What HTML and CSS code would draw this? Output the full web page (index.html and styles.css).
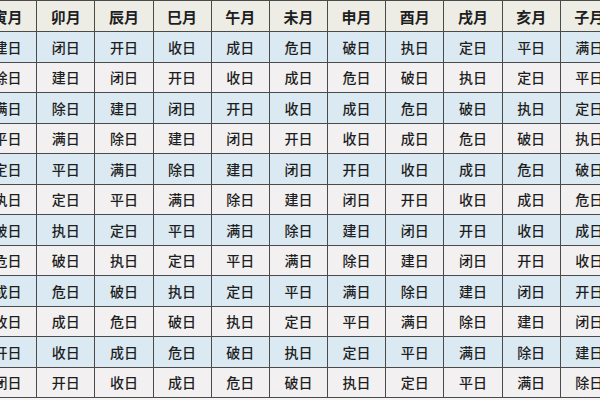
FILE: index.html
```html
<!DOCTYPE html>
<html lang="zh">
<head>
<meta charset="utf-8">
<title>建除十二神</title>
<link rel="stylesheet" href="styles.css">
</head>
<body>
<div class="sheet">
  <table class="grid">
    <thead>
      <tr><th>寅月</th><th>卯月</th><th>辰月</th><th>巳月</th><th>午月</th><th>未月</th><th>申月</th><th>酉月</th><th>戌月</th><th>亥月</th><th>子月</th></tr>
    </thead>
    <tbody>
      <tr class="blue"><td>建日</td><td>闭日</td><td>开日</td><td>收日</td><td>成日</td><td>危日</td><td>破日</td><td>执日</td><td>定日</td><td>平日</td><td>满日</td></tr>
      <tr class="grey"><td>除日</td><td>建日</td><td>闭日</td><td>开日</td><td>收日</td><td>成日</td><td>危日</td><td>破日</td><td>执日</td><td>定日</td><td>平日</td></tr>
      <tr class="blue"><td>满日</td><td>除日</td><td>建日</td><td>闭日</td><td>开日</td><td>收日</td><td>成日</td><td>危日</td><td>破日</td><td>执日</td><td>定日</td></tr>
      <tr class="grey"><td>平日</td><td>满日</td><td>除日</td><td>建日</td><td>闭日</td><td>开日</td><td>收日</td><td>成日</td><td>危日</td><td>破日</td><td>执日</td></tr>
      <tr class="blue"><td>定日</td><td>平日</td><td>满日</td><td>除日</td><td>建日</td><td>闭日</td><td>开日</td><td>收日</td><td>成日</td><td>危日</td><td>破日</td></tr>
      <tr class="grey"><td>执日</td><td>定日</td><td>平日</td><td>满日</td><td>除日</td><td>建日</td><td>闭日</td><td>开日</td><td>收日</td><td>成日</td><td>危日</td></tr>
      <tr class="blue"><td>破日</td><td>执日</td><td>定日</td><td>平日</td><td>满日</td><td>除日</td><td>建日</td><td>闭日</td><td>开日</td><td>收日</td><td>成日</td></tr>
      <tr class="grey"><td>危日</td><td>破日</td><td>执日</td><td>定日</td><td>平日</td><td>满日</td><td>除日</td><td>建日</td><td>闭日</td><td>开日</td><td>收日</td></tr>
      <tr class="blue"><td>成日</td><td>危日</td><td>破日</td><td>执日</td><td>定日</td><td>平日</td><td>满日</td><td>除日</td><td>建日</td><td>闭日</td><td>开日</td></tr>
      <tr class="grey"><td>收日</td><td>成日</td><td>危日</td><td>破日</td><td>执日</td><td>定日</td><td>平日</td><td>满日</td><td>除日</td><td>建日</td><td>闭日</td></tr>
      <tr class="blue"><td>开日</td><td>收日</td><td>成日</td><td>危日</td><td>破日</td><td>执日</td><td>定日</td><td>平日</td><td>满日</td><td>除日</td><td>建日</td></tr>
      <tr class="grey"><td>闭日</td><td>开日</td><td>收日</td><td>成日</td><td>危日</td><td>破日</td><td>执日</td><td>定日</td><td>平日</td><td>满日</td><td>除日</td></tr>
    </tbody>
  </table>
</div>
</body>
</html>
```
FILE: styles.css
```css
html, body {
  margin: 0;
  padding: 0;
  background: #f4f4f2;
}
body {
  width: 600px;
  height: 400px;
  overflow: hidden;
}
.sheet {
  margin-left: -22px;
  width: 650px;
}
.grid {
  border-collapse: collapse;
  table-layout: fixed;
  width: 641px;
  font-family: "Noto Sans CJK SC", "Noto Sans CJK JP", sans-serif;
  color: #1e1e1e;
}
.grid th,
.grid td {
  border: 1px solid #4a4a4a;
  text-align: center;
  padding: 0;
  white-space: nowrap;
  overflow: hidden;
}
.grid th {
  height: 30px;
  font-size: 15px;
  font-weight: 700;
  background: #ededE6;
}
.grid td {
  height: 29.5px;
  font-size: 14px;
  font-weight: 500;
}
.grid tr.blue td {
  background: #dae9f2;
}
.grid tr.grey td {
  background: #f2f0f1;
}
```
